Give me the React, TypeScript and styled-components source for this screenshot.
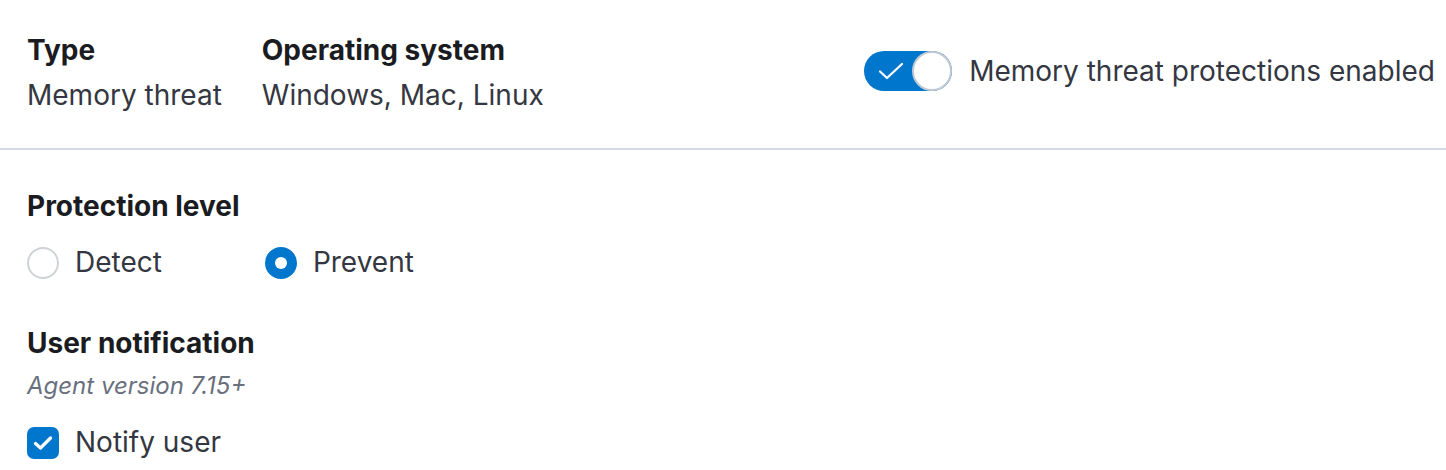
import React from "react";
import styled, { createGlobalStyle } from "styled-components";

const GlobalStyle = createGlobalStyle`
  html, body { margin: 0; padding: 0; background: #ffffff; }
  body { font-family: Inter, "Noto Sans", sans-serif; color: #343741; -webkit-font-smoothing: antialiased; }
  * { box-sizing: border-box; }
`;

const Page = styled.div`
  width: 1446px;
  height: 470px;
  overflow: hidden;
  background: #fff;
`;

const Header = styled.div`
  display: flex;
  align-items: center;
  padding: 28px 11px 30px 27px;
`;

const DescList = styled.dl`
  display: flex;
  gap: 40px;
  margin: 0;
`;

const DescItem = styled.div`
  display: flex;
  flex-direction: column;
`;

const DescTitle = styled.dt`
  font-size: 28px;
  line-height: 45px;
  font-weight: 700;
  color: #1a1c21;
`;

const DescValue = styled.dd`
  margin: 0;
  font-size: 28px;
  line-height: 45px;
  color: #343741;
`;

const SwitchLabel = styled.label`
  margin-left: auto;
  margin-bottom: 4px;
  display: flex;
  align-items: center;
  gap: 17px;
  font-size: 28px;
  line-height: 40px;
  color: #343741;
`;

const SwitchTrack = styled.span`
  position: relative;
  display: inline-flex;
  align-items: center;
  width: 88px;
  height: 40px;
  border-radius: 20px;
  background: #0077cc;
  flex: none;
`;

const SwitchIcon = styled.svg`
  margin-left: 14px;
`;

const SwitchKnob = styled.span`
  position: absolute;
  right: 0;
  top: 0;
  width: 40px;
  height: 40px;
  border-radius: 50%;
  background: #fff;
  border: 2px solid #c1c9d4;
`;

const Divider = styled.hr`
  margin: 0;
  border: none;
  height: 2px;
  background: #d3dae6;
`;

const Body = styled.div`
  padding: 34px 28px 0 27px;
`;

const SectionTitle = styled.h3<{ $gap: number }>`
  margin: 0 0 ${(p) => p.$gap}px 0;
  font-size: 28px;
  line-height: 45px;
  font-weight: 700;
  color: #1a1c21;
`;

const RadioGroup = styled.div`
  display: flex;
  gap: 103px;
  margin-bottom: 36px;
`;

const ChoiceLabel = styled.label`
  display: flex;
  align-items: center;
  gap: 16px;
  font-size: 28px;
  line-height: 45px;
  color: #343741;
`;

const RadioCircle = styled.span<{ $checked?: boolean }>`
  width: 32px;
  height: 32px;
  border-radius: 50%;
  flex: none;
  display: flex;
  align-items: center;
  justify-content: center;
  background: ${(p) => (p.$checked ? "#0077cc" : "#fff")};
  border: 2px solid ${(p) => (p.$checked ? "#0077cc" : "#cfd2d6")};
  &::after {
    content: "";
    display: ${(p) => (p.$checked ? "block" : "none")};
    width: 12px;
    height: 12px;
    border-radius: 50%;
    background: #fff;
  }
`;

const Hint = styled.div`
  font-size: 24px;
  line-height: 36px;
  font-style: italic;
  color: #69707d;
  margin-bottom: 16px;
`;

const CheckBox = styled.span`
  width: 32px;
  height: 32px;
  border-radius: 7px;
  background: #0077cc;
  flex: none;
  display: flex;
  align-items: center;
  justify-content: center;
`;

export default function App() {
  return (
    <Page>
      <GlobalStyle />
      <Header>
        <DescList>
          <DescItem>
            <DescTitle>Type</DescTitle>
            <DescValue>Memory threat</DescValue>
          </DescItem>
          <DescItem>
            <DescTitle>Operating system</DescTitle>
            <DescValue>Windows, Mac, Linux</DescValue>
          </DescItem>
        </DescList>
        <SwitchLabel>
          <SwitchTrack>
            <SwitchIcon width="26" height="18" viewBox="0 0 26 18" fill="none">
              <path d="M2 9.5 L9 16 L24 2" stroke="#fff" strokeWidth="2.2" strokeLinecap="round" strokeLinejoin="round" />
            </SwitchIcon>
            <SwitchKnob />
          </SwitchTrack>
          Memory threat protections enabled
        </SwitchLabel>
      </Header>
      <Divider />
      <Body>
        <SectionTitle $gap={11}>Protection level</SectionTitle>
        <RadioGroup>
          <ChoiceLabel>
            <RadioCircle />
            Detect
          </ChoiceLabel>
          <ChoiceLabel>
            <RadioCircle $checked />
            Prevent
          </ChoiceLabel>
        </RadioGroup>
        <SectionTitle $gap={2}>User notification</SectionTitle>
        <Hint>Agent version 7.15+</Hint>
        <ChoiceLabel>
          <CheckBox>
            <svg width="20" height="16" viewBox="0 0 20 16" fill="none">
              <path d="M2.5 8.5 L7.5 13 L17.5 3" stroke="#fff" strokeWidth="3.2" strokeLinecap="round" strokeLinejoin="round" />
            </svg>
          </CheckBox>
          Notify user
        </ChoiceLabel>
      </Body>
    </Page>
  );
}
